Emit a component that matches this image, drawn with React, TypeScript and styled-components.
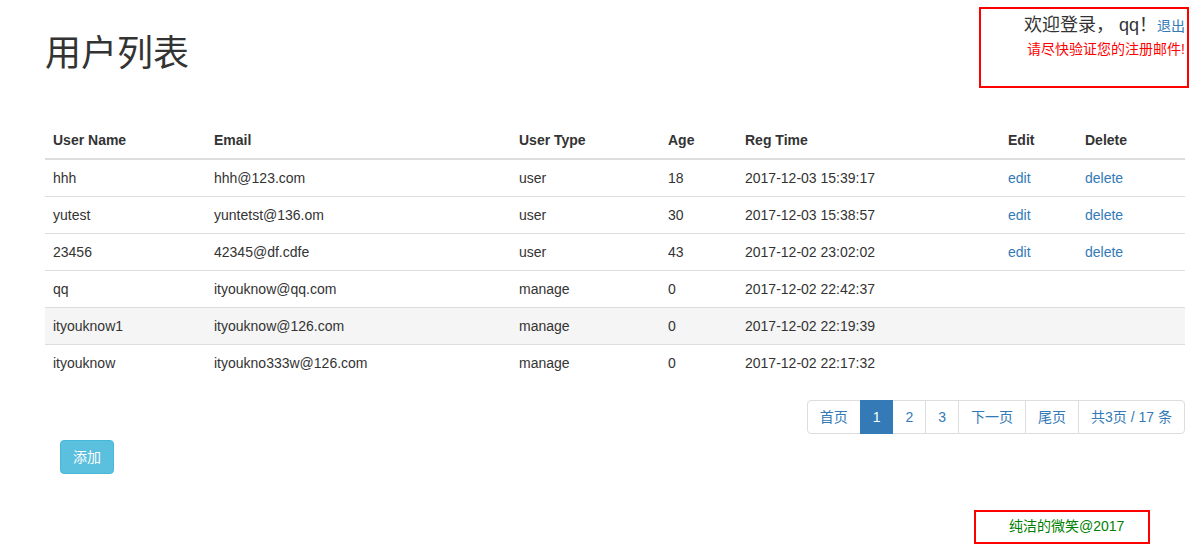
import React from "react";
import styled, { createGlobalStyle } from "styled-components";

const Global = createGlobalStyle`
  html, body { margin: 0; padding: 0; background: #fff; }
  body {
    font-family: "Liberation Sans", Arial, "Noto Sans CJK SC", sans-serif;
    font-size: 14px;
    line-height: 1.42857;
    color: #333;
  }
  * { box-sizing: border-box; }
`;

const Page = styled.div`
  width: 1194px;
  display: flex;
  flex-direction: column;
`;

const Header = styled.div`
  display: flex;
  justify-content: space-between;
  align-items: flex-start;
  padding: 7px 5px 0 45px;
  height: 122px;
`;

const Title = styled.h1`
  margin: 27px 0 0;
  font-size: 36px;
  font-weight: 400;
  line-height: 1.1;
  color: #333;
  font-family: "Liberation Sans", "Noto Sans CJK SC", sans-serif;
`;

const WelcomeBox = styled.div`
  width: 210px;
  height: 81px;
  border: 2px solid #ff0000;
  padding: 3px 2px 0 0;
  text-align: right;
  font-family: "Liberation Sans", "Noto Sans CJK SC", sans-serif;
`;

const WelcomeLine = styled.div`
  font-size: 18px;
  line-height: 26px;
  color: #333;
`;

const SmallLink = styled.a`
  font-size: 14px;
  color: #337ab7;
  text-decoration: none;
`;

const Warn = styled.div`
  font-size: 14px;
  line-height: 20px;
  color: #ff0000;
`;

const Content = styled.div`
  padding-left: 45px;
  width: 1185px;
  display: flex;
  flex-direction: column;
`;

const Table = styled.table`
  width: 1140px;
  border-collapse: collapse;
  border-spacing: 0;
  table-layout: fixed;
`;

const Th = styled.th<{ $w: number }>`
  width: ${(p) => p.$w}px;
  text-align: left;
  font-weight: bold;
  padding: 8px;
  line-height: 20px;
  border-bottom: 2px solid #ddd;
  vertical-align: bottom;
`;

const Tr = styled.tr<{ $hover?: boolean }>`
  background: ${(p) => (p.$hover ? "#f5f5f5" : "transparent")};
`;

const Td = styled.td`
  padding: 8px;
  line-height: 20px;
  border-top: 1px solid #ddd;
  vertical-align: top;
  white-space: nowrap;
`;

const TableLink = styled.a`
  color: #337ab7;
  text-decoration: none;
`;

const PagerRow = styled.div`
  display: flex;
  justify-content: flex-end;
  margin-top: 19px;
`;

const Pager = styled.ul`
  display: flex;
  margin: 0;
  padding: 0;
  list-style: none;
`;

const PageItem = styled.li<{ $active?: boolean; $first?: boolean; $last?: boolean }>`
  padding: 6px 12px;
  line-height: 20px;
  font-size: 14px;
  border: 1px solid ${(p) => (p.$active ? "#337ab7" : "#ddd")};
  margin-left: ${(p) => (p.$first ? 0 : -1)}px;
  background: ${(p) => (p.$active ? "#337ab7" : "#fff")};
  color: ${(p) => (p.$active ? "#fff" : "#337ab7")};
  position: relative;
  z-index: ${(p) => (p.$active ? 2 : 1)};
  border-radius: ${(p) => (p.$first ? "4px 0 0 4px" : p.$last ? "0 4px 4px 0" : "0")};
  font-family: "Liberation Sans", "Noto Sans CJK SC", sans-serif;
`;

const ButtonRow = styled.div`
  display: flex;
  padding-left: 15px;
  margin-top: 6px;
`;

const AddButton = styled.button`
  padding: 6px 12px;
  font-size: 14px;
  line-height: 20px;
  color: #fff;
  background: #5bc0de;
  border: 1px solid #46b8da;
  border-radius: 4px;
  font-family: "Liberation Sans", "Noto Sans CJK SC", sans-serif;
  cursor: pointer;
`;

const FooterRow = styled.div`
  display: flex;
  justify-content: flex-end;
  padding-right: 44px;
  margin-top: 36px;
`;

const FooterBox = styled.div`
  width: 176px;
  height: 34px;
  border: 2px solid #ff0000;
  padding-left: 33px;
  line-height: 28px;
  color: #008000;
  font-size: 14px;
  font-family: "Liberation Sans", "Noto Sans CJK SC", sans-serif;
`;

const cols = [
  { name: "User Name", w: 161 },
  { name: "Email", w: 305 },
  { name: "User Type", w: 149 },
  { name: "Age", w: 77 },
  { name: "Reg Time", w: 263 },
  { name: "Edit", w: 77 },
  { name: "Delete", w: 108 },
];

const rows = [
  { u: "hhh", e: "hhh@123.com", t: "user", a: "18", r: "2017-12-03 15:39:17", ed: true },
  { u: "yutest", e: "yuntetst@136.om", t: "user", a: "30", r: "2017-12-03 15:38:57", ed: true },
  { u: "23456", e: "42345@df.cdfe", t: "user", a: "43", r: "2017-12-02 23:02:02", ed: true },
  { u: "qq", e: "ityouknow@qq.com", t: "manage", a: "0", r: "2017-12-02 22:42:37", ed: false },
  { u: "ityouknow1", e: "ityouknow@126.com", t: "manage", a: "0", r: "2017-12-02 22:19:39", ed: false, hover: true },
  { u: "ityouknow", e: "ityoukno333w@126.com", t: "manage", a: "0", r: "2017-12-02 22:17:32", ed: false },
];

const pages = ["首页", "1", "2", "3", "下一页", "尾页", "共3页 / 17 条"];

export default function App() {
  return (
    <Page>
      <Global />
      <Header>
        <Title>用户列表</Title>
        <WelcomeBox>
          <WelcomeLine>
            欢迎登录， qq！<SmallLink href="#">退出</SmallLink>
          </WelcomeLine>
          <Warn>请尽快验证您的注册邮件!</Warn>
        </WelcomeBox>
      </Header>
      <Content>
        <Table>
          <thead>
            <tr>
              {cols.map((c) => (
                <Th key={c.name} $w={c.w}>
                  {c.name}
                </Th>
              ))}
            </tr>
          </thead>
          <tbody>
            {rows.map((r) => (
              <Tr key={r.u} $hover={r.hover}>
                <Td>{r.u}</Td>
                <Td>{r.e}</Td>
                <Td>{r.t}</Td>
                <Td>{r.a}</Td>
                <Td>{r.r}</Td>
                <Td>{r.ed && <TableLink href="#">edit</TableLink>}</Td>
                <Td>{r.ed && <TableLink href="#">delete</TableLink>}</Td>
              </Tr>
            ))}
          </tbody>
        </Table>
        <PagerRow>
          <Pager>
            {pages.map((p, i) => (
              <PageItem
                key={p}
                $active={p === "1"}
                $first={i === 0}
                $last={i === pages.length - 1}
              >
                {p}
              </PageItem>
            ))}
          </Pager>
        </PagerRow>
        <ButtonRow>
          <AddButton>添加</AddButton>
        </ButtonRow>
      </Content>
      <FooterRow>
        <FooterBox>纯洁的微笑@2017</FooterBox>
      </FooterRow>
    </Page>
  );
}
